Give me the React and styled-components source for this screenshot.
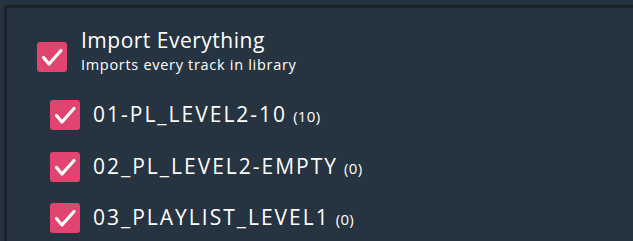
import React from "react";
import styled, { createGlobalStyle } from "styled-components";

const Global = createGlobalStyle`
  html, body { margin: 0; padding: 0; background: #263341; }
  body { font-family: "Open Sans", "Noto Sans", sans-serif; color: #fff; overflow: hidden; }
`;

const Outer = styled.div`
  width: 633px;
  height: 241px;
  padding: 5px 0 0 4px;
  box-sizing: border-box;
  background: #263341;
`;

const Panel = styled.div`
  border-left: 3px solid #1e2125;
  border-top: 3px solid #1e2125;
  height: 100%;
  box-sizing: border-box;
  padding: 20px 0 0 30px;
  display: flex;
  flex-direction: column;
`;

const Header = styled.label`
  display: flex;
  align-items: flex-start;
  gap: 14px;
`;

const Row = styled.label`
  display: flex;
  align-items: center;
  gap: 13px;
`;

const Box = styled.span`
  width: 30px;
  height: 30px;
  flex: none;
  border-radius: 3px;
  background: #e0446f;
  margin-top: ${(p) => p.$top || 0}px;
`;

const Texts = styled.div`
  display: flex;
  flex-direction: column;
`;

const Title = styled.span`
  font-size: 21px;
  line-height: 24px;
  letter-spacing: 0.5px;
`;

const Sub = styled.span`
  font-size: 14.5px;
  line-height: 18px;
  letter-spacing: 0.7px;
  margin-top: 4px;
`;

const List = styled.div`
  display: flex;
  flex-direction: column;
  gap: 19.5px;
  margin-top: 25px;
  padding-left: 13px;
`;

const Name = styled.span`
  font-size: 21px;
  line-height: 30px;
  letter-spacing: 2px;
  white-space: nowrap;
`;

const Count = styled.span`
  font-size: 15px;
  letter-spacing: 0.3px;
  margin-left: 6px;
`;

const Check = () => (
  <svg width="30" height="30" viewBox="0 0 30 30" style={{ display: "block" }}>
    <path d="M6.5 15.5 L12 22 L24 8.5" fill="none" stroke="#fff" strokeWidth="3.2" strokeLinecap="round" strokeLinejoin="round" />
  </svg>
);

const items = [
  ["01-PL_LEVEL2-10", 10],
  ["02_PL_LEVEL2-EMPTY", 0],
  ["03_PLAYLIST_LEVEL1", 0],
];

export default function App() {
  return (
    <Outer>
      <Global />
      <Panel>
        <Header>
          <Box $top={14}><Check /></Box>
          <Texts>
            <Title>Import Everything</Title>
            <Sub>Imports every track in library</Sub>
          </Texts>
        </Header>
        <List>
          {items.map(([n, c]) => (
            <Row key={n}>
              <Box><Check /></Box>
              <Name>
                {n}
                <Count>({c})</Count>
              </Name>
            </Row>
          ))}
        </List>
      </Panel>
    </Outer>
  );
}
